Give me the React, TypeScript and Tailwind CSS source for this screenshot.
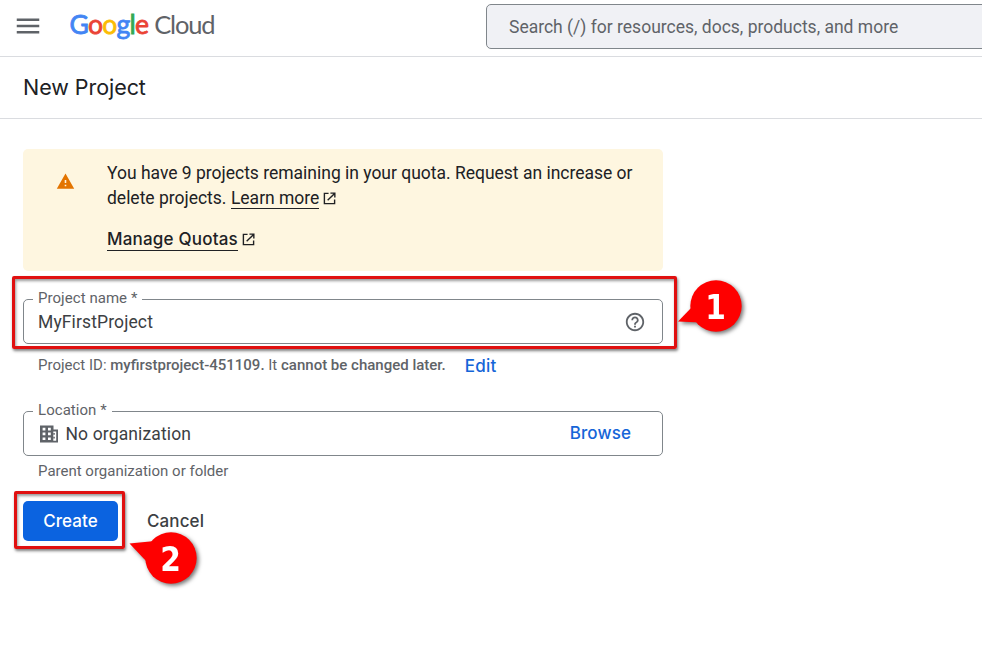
import { ReactNode } from 'react';
import { MdHelpOutline, MdMenu, MdWarning } from 'react-icons/md';

const ExternalIcon = ({ className }: { className: string }) => (
  <svg viewBox="0 0 14 14" className={className} fill="none" stroke="#202124" strokeWidth="1.5">
    <path d="M6 1.5H1.5v11h11V8M8 1.25h4.75V6M12.5 1.5L5 9" />
  </svg>
);

const OrganizationIcon = () => (
  <svg viewBox="0 0 18 18" className="ml-[2px] size-[18px]" fill="#5f6368">
    <path
      fillRule="evenodd"
      d="M0 0.5h13.5v4H18v13H0zM2.6 2.8v2.6h2.8V2.8zM8 2.8v2.6h2.8V2.8zM2.6 7.6v2.6h2.8V7.6zM8 7.6v2.6h2.8V7.6zM2.6 12.5v2.6h2.8v-2.6zM8 12.5v2.6h2.8v-2.6zM13.3 6.4v9.3h2.9V6.4z"
    />
    <path d="M13.3 8h1.5v1.7h-1.5zM13.3 11.8h1.5v1.7h-1.5z" />
  </svg>
);

const Logo = () => (
  <div className="flex items-baseline font-['Lato'] leading-8">
    <span className="text-[26.5px] tracking-[-0.75px] [-webkit-text-stroke:0.8px_currentColor]">
      <span className="text-[#4285f4]">G</span>
      <span className="text-[#ea4335]">o</span>
      <span className="text-[#fbbc04]">o</span>
      <span className="text-[#4285f4]">g</span>
      <span className="text-[#34a853]">l</span>
      <span className="text-[#ea4335]">e</span>
    </span>
    <span className="ml-[6px] text-[25.5px] tracking-[-1.2px] text-[#5f6368]">Cloud</span>
  </div>
);

type FieldProps = {
  label: string;
  children: ReactNode;
};

const Field = ({ label, children }: FieldProps) => (
  <div className="relative flex h-[45px] w-[640px] items-center rounded-[5px] border border-[#80868b] pl-[14px] text-[17.5px] text-[#3c4043]">
    <span className="absolute top-[-13px] left-[9px] bg-white px-[5px] text-[15px] leading-[22px] tracking-[0.05px] text-[#5f6368]">
      {label}
    </span>
    {children}
  </div>
);

type CalloutProps = {
  step: string;
  tail: string;
  className: string;
};

// Numbered balloon, the tail is drawn in the same 80x60 box as the circle
const Callout = ({ step, tail, className }: CalloutProps) => (
  <svg
    viewBox="0 0 80 60"
    className={`absolute h-[60px] w-[80px] overflow-visible drop-shadow-[2px_2px_2px_rgba(0,0,0,0.55)] ${className}`}
  >
    <path d={tail} fill="#fe0000" />
    <circle cx="42" cy="30" r="25.7" fill="#fe0000" />
    <text
      x="41.5"
      y="43"
      textAnchor="middle"
      className="fill-white font-['DejaVu_Sans_Condensed','DejaVu_Sans'] text-[33px] font-bold [font-stretch:condensed]"
    >
      {step}
    </text>
  </svg>
);

const highlight =
  'pointer-events-none absolute border-[3.5px] border-[#e01010] rounded-[2px] shadow-[1px_2px_3px_rgba(0,0,0,0.5),inset_1px_2px_3px_rgba(0,0,0,0.4)]';

const App = () => {
  return (
    <div className="relative h-[666px] w-[982px] overflow-hidden bg-white font-['Roboto',sans-serif] text-[#202124]">
      <header className="flex h-[57px] items-start border-b border-[#dadce0]">
        <MdMenu className="mt-[11px] ml-[13px] size-[30px] shrink-0 text-[#5f6368]" />
        <div className="mt-2 ml-[26.5px] w-[416.5px] shrink-0">
          <Logo />
        </div>
        <div className="mt-1 h-[45px] w-[520px] shrink-0 rounded-[5px] border border-[#80868b] bg-[#f0f1f5] pl-[22px] text-[17.5px] leading-[44px] text-[#5f6368]">
          Search (/) for resources, docs, products, and more
        </div>
      </header>

      <div className="h-[62px] border-b border-[#dadce0] pl-[23px]">
        <h1 className="font-['Inter'] text-[21.5px] leading-[60px] tracking-[-0.05px]">New Project</h1>
      </div>

      <main className="pt-[30px] pl-[23px]">
        <div className="flex h-[122px] w-[640px] rounded-[5px] bg-[#fef6e0]">
          <MdWarning className="mt-[23px] ml-[33px] size-[19px] shrink-0 text-[#e37400]" />
          <div className="ml-8 pt-3 text-[17.5px] leading-[25px] tracking-[-0.01px]">
            <p>You have 9 projects remaining in your quota. Request an increase or</p>
            <div className="flex h-[25px] items-start">
              <span className="mr-[4.5px]">delete projects.</span>
              <a className="h-[23px] border-b border-[#202124]">Learn more</a>
              <ExternalIcon className="mt-[6px] ml-1 size-[13px]" />
            </div>
            <div className="mt-4 flex items-center">
              <a className="h-[24px] border-b border-[#202124] font-['Inter'] text-[17px] font-medium tracking-[0.2px]">
                Manage Quotas
              </a>
              <ExternalIcon className="ml-1 size-[13px]" />
            </div>
          </div>
        </div>

        <div className="mt-7">
          <Field label="Project name *">
            <span className="mt-px tracking-[0.12px]">MyFirstProject</span>
            <MdHelpOutline className="mr-4 ml-auto size-[22px] text-[#5f6368]" />
          </Field>
        </div>
        <div className="flex h-[43px] items-center pl-[15px] text-[15px] text-[#5f6368]">
          <span>
            Project ID: <b className="font-medium">myfirstproject-451109.</b> It{' '}
            <b className="font-medium">cannot be changed later.</b>
          </span>
          <a className="mt-[3px] ml-[19px] font-['Inter'] text-[17px] font-medium tracking-[0.2px] text-[#1565d8]">
            Edit
          </a>
        </div>

        <div className="mt-[24px]">
          <Field label="Location *">
            <OrganizationIcon />
            <span className="mt-px ml-[7.5px] tracking-[0.13px]">No organization</span>
            <a className="mt-px mr-[31px] ml-auto font-['Inter'] text-[17px] font-medium tracking-[0.1px] text-[#1565d8]">
              Browse
            </a>
          </Field>
        </div>
        <p className="mt-1 pl-[15px] text-[15px] leading-[22px] text-[#5f6368]">Parent organization or folder</p>

        <div className="mt-[19px] flex items-center gap-[29px] font-['Inter'] text-[17px] font-medium tracking-[0.1px]">
          <button className="h-10 w-[95px] rounded-[5px] bg-[#0b63e0] pt-0.5 text-white">Create</button>
          <button className="pt-0.5 text-[#3c4043]">Cancel</button>
        </div>
      </main>

      <div className={`top-[276px] left-[12px] h-[73px] w-[665px] ${highlight}`} />
      <div className={`top-[491px] left-[14px] h-[58px] w-[111px] ${highlight}`} />
      <Callout step="1" tail="M4 45.5L20 29L27 46.5Z" className="top-[275.5px] left-[673.5px]" />
      <Callout step="2" tail="M0.5 15.5L26 13L18 34Z" className="top-[527.5px] left-[129px]" />
    </div>
  );
};

export default App;
